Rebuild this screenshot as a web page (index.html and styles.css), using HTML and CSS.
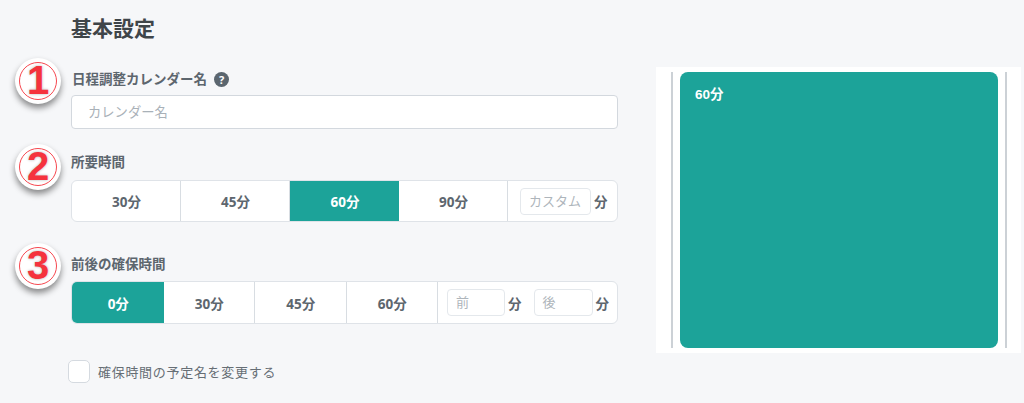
FILE: index.html
```html
<!DOCTYPE html>
<html lang="ja">
<head>
    <meta charset="UTF-8">
    <meta name="viewport" content="width=device-width, initial-scale=1.0">
    <title>基本設定</title>
    <link rel="stylesheet" href="styles.css">
</head>
<body>
    <div class="page">
        <div class="settings">
            <h2 class="title">基本設定</h2>

            <div class="field field_name">
                <span class="badge"><span class="badge_ring">1</span></span>
                <div class="label">日程調整カレンダー名 <span class="help">?</span></div>
                <div class="text_input">カレンダー名</div>
            </div>

            <div class="field field_time">
                <span class="badge"><span class="badge_ring">2</span></span>
                <div class="label">所要時間</div>
                <div class="choices">
                    <div class="choice">30分</div>
                    <div class="choice">45分</div>
                    <div class="choice active">60分</div>
                    <div class="choice">90分</div>
                    <div class="custom custom_time">
                        <div class="mini_input mini_wide">カスタム</div>
                        <b>分</b>
                    </div>
                </div>
            </div>

            <div class="field field_buffer">
                <span class="badge"><span class="badge_ring">3</span></span>
                <div class="label">前後の確保時間</div>
                <div class="choices choices_buffer">
                    <div class="choice active">0分</div>
                    <div class="choice">30分</div>
                    <div class="choice">45分</div>
                    <div class="choice">60分</div>
                    <div class="custom custom_buffer">
                        <div class="mini_input">前</div>
                        <b>分</b>
                        <div class="mini_input mini_after">後</div>
                        <b>分</b>
                    </div>
                </div>
            </div>

            <label class="check_row">
                <span class="checkbox"></span>
                確保時間の予定名を変更する
            </label>
        </div>

        <div class="preview">
            <div class="preview_event">60分</div>
        </div>
    </div>
</body>
</html>
```

FILE: styles.css
```css
* {
    margin: 0;
    padding: 0;
    box-sizing: border-box;
}

body {
    background-color: #f6f7f9;
    font-family: "Noto Sans", "Noto Sans CJK JP", sans-serif;
    color: #5d666e;
    height: 403px;
    overflow: hidden;
}

.page {
    display: flex;
    align-items: flex-start;
}

.settings {
    width: 618px;
    padding-left: 71px;
    flex-shrink: 0;
}

.title {
    font-size: 21px;
    line-height: 30px;
    font-weight: 700;
    color: #3f4549;
    margin-top: 13px;
}

.field {
    position: relative;
}

.field_name {
    margin-top: 27px;
}

.field_time {
    margin-top: 24px;
}

.field_buffer {
    margin-top: 33px;
}

.label {
    font-size: 13.5px;
    line-height: 18px;
    font-weight: 700;
    display: flex;
    align-items: center;
    gap: 7px;
    margin-bottom: 7px;
    padding-left: 1px;
}

.field_time .label {
    padding-left: 0;
    margin-bottom: 9px;
}

.field_buffer .label {
    padding-left: 0;
    margin-bottom: 8px;
}

.help {
    width: 15px;
    height: 15px;
    border-radius: 50%;
    background-color: #5b666f;
    color: white;
    font-size: 11px;
    line-height: 15px;
    text-align: center;
}

.badge {
    position: absolute;
    left: -56px;
    top: -12px;
    width: 46px;
    height: 46px;
    border-radius: 50%;
    background-color: white;
    box-shadow: 0 4px 6px rgba(0, 0, 0, 0.45);
    padding: 4px;
}

.field_time .badge {
    top: -9px;
}

.field_buffer .badge {
    top: -12px;
}

.badge_ring {
    display: block;
    width: 38px;
    height: 38px;
    border-radius: 50%;
    border: 1.5px solid #f6474f;
    color: #f5333d;
    font-family: "Liberation Sans", sans-serif;
    font-size: 40px;
    font-weight: 700;
    line-height: 35px;
    text-align: center;
    text-shadow: 0 0 3px rgba(0, 0, 0, 0.3);
}

.text_input {
    height: 34px;
    border: 1px solid #d3d8de;
    border-radius: 4px;
    background-color: white;
    padding-left: 16px;
    font-size: 13.3px;
    line-height: 33px;
    color: #a9b1b8;
}

.choices {
    display: flex;
    height: 42px;
    border: 1px solid #dfe3e8;
    border-radius: 6px;
    background-color: white;
    overflow: hidden;
}

.choices_buffer {
    height: 43px;
}

.choice {
    width: 109px;
    flex-shrink: 0;
    padding-left: 1px;
    border-right: 1px solid #d8dde2;
    font-size: 13.5px;
    font-weight: 700;
    display: flex;
    align-items: center;
    justify-content: center;
}

.choices_buffer .choice {
    width: 91.5px;
}

.choice.active {
    background-color: #1ca399;
    color: white;
    border-right: none;
}

.custom {
    flex: 1;
    display: flex;
    align-items: center;
    font-size: 13.5px;
}

.custom_time {
    padding-left: 12px;
    gap: 3px;
}

.custom_buffer {
    padding-left: 9px;
}

.custom_buffer b {
    margin-left: 3px;
    margin-right: 12px;
}

.custom_buffer b:last-child {
    margin-right: 0;
}

.mini_input {
    width: 58px;
    height: 27px;
    border: 1px solid #e4e8ec;
    border-radius: 4px;
    padding-left: 8px;
    font-size: 13px;
    line-height: 25px;
    color: #aeb5bb;
    background-color: white;
}

.mini_after {
    width: 59px;
}

.mini_wide {
    width: 71px;
}

.check_row {
    display: flex;
    align-items: center;
    gap: 8px;
    margin-top: 36px;
    margin-left: -3px;
    font-size: 13px;
    letter-spacing: 0.7px;
    color: #666e75;
}

.checkbox {
    width: 22px;
    height: 23px;
    border: 1.5px solid #d5dae0;
    border-radius: 5px;
    background-color: white;
}

.preview {
    width: 365px;
    height: 286px;
    margin-top: 67px;
    margin-left: 38px;
    background-color: white;
    padding: 5px 14px 5px 15px;
    display: flex;
    justify-content: space-between;
}

.preview::before,
.preview::after {
    content: "";
    width: 2px;
    background-color: #ccd1d6;
}

.preview_event {
    width: 318px;
    background-color: #1ca399;
    border-radius: 8px;
    color: white;
    font-family: "Liberation Sans", "Noto Sans CJK JP", sans-serif;
    font-size: 13.5px;
    font-weight: 700;
    padding: 11px 15px;
}
```
